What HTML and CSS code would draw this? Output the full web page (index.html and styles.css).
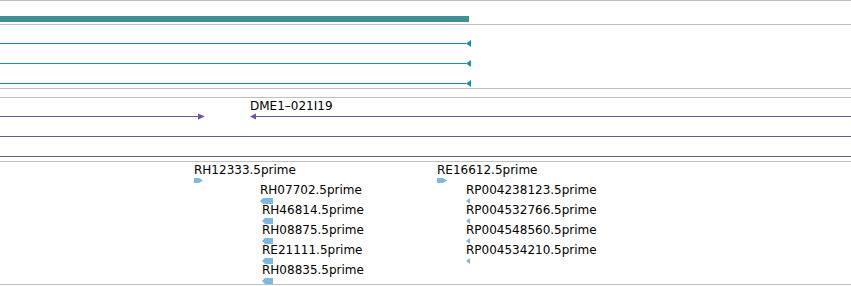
FILE: index.html
```html
<!DOCTYPE html>
<html>
<head>
<meta charset="utf-8">
<link rel="stylesheet" href="styles.css">
</head>
<body>
<div class="browser">
  <div class="track track-a">
    <div class="coverage"></div>
  </div>

  <div class="track track-b">
    <div class="row">
      <span class="line line-b"></span>
      <svg class="head" width="5" height="7" viewBox="0 0 5 7"><polygon points="0,3.5 5,0 5,7" fill="#1790b0"/></svg>
    </div>
    <div class="row">
      <span class="line line-b"></span>
      <svg class="head" width="5" height="7" viewBox="0 0 5 7"><polygon points="0,3.5 5,0 5,7" fill="#1790b0"/></svg>
    </div>
    <div class="row">
      <span class="line line-b"></span>
      <svg class="head" width="5" height="7" viewBox="0 0 5 7"><polygon points="0,3.5 5,0 5,7" fill="#1790b0"/></svg>
    </div>
  </div>

  <div class="spacer"></div>

  <div class="track track-c">
    <div class="clone-label">DME1–021I19</div>
    <div class="rows">
      <div class="row">
        <span class="line line-c seg-left"></span>
        <svg class="head" width="7" height="7" viewBox="0 0 7 7"><polygon points="0,0.5 7,3.5 0,6.5" fill="#7253a8"/></svg>
        <span class="gap-c"></span>
        <svg class="head" width="6" height="7" viewBox="0 0 6 7"><polygon points="0,3.5 6,0.5 6,6.5" fill="#7253a8"/></svg>
        <span class="line line-c seg-fill"></span>
      </div>
      <div class="row"><span class="line line-c seg-fill"></span></div>
      <div class="row"><span class="line line-c seg-fill"></span></div>
    </div>
  </div>

  <div class="track track-d">
    <div class="feature" style="left:194px;top:1px">
      <span class="label">RH12333.5prime</span>
      <svg width="9" height="6" viewBox="0 0 9 6"><polygon points="0,0 5,0 9,2.5 5,5 0,5" fill="#7cb8df"/></svg>
    </div>
    <div class="feature" style="left:260px;top:21px">
      <span class="label">RH07702.5prime</span>
      <svg width="13" height="6" viewBox="0 0 13 6"><polygon points="0,3 3,0 13,0 13,6 3,6" fill="#7cb8df"/></svg>
    </div>
    <div class="feature" style="left:262px;top:41px">
      <span class="label">RH46814.5prime</span>
      <svg width="11" height="6" viewBox="0 0 11 6"><polygon points="0,3 3,0 11,0 11,6 3,6" fill="#7cb8df"/></svg>
    </div>
    <div class="feature" style="left:262px;top:61px">
      <span class="label">RH08875.5prime</span>
      <svg width="11" height="6" viewBox="0 0 11 6"><polygon points="0,3 3,0 11,0 11,6 3,6" fill="#7cb8df"/></svg>
    </div>
    <div class="feature" style="left:262px;top:81px">
      <span class="label">RE21111.5prime</span>
      <svg width="11" height="6" viewBox="0 0 11 6"><polygon points="0,3 3,0 11,0 11,6 3,6" fill="#7cb8df"/></svg>
    </div>
    <div class="feature" style="left:262px;top:101px">
      <span class="label">RH08835.5prime</span>
      <svg width="11" height="6" viewBox="0 0 11 6"><polygon points="0,3 3,0 11,0 11,6 3,6" fill="#7cb8df"/></svg>
    </div>

    <div class="feature" style="left:437px;top:1px">
      <span class="label">RE16612.5prime</span>
      <svg width="10" height="6" viewBox="0 0 10 6"><polygon points="0,0 6,0 10,2.5 6,5 0,5" fill="#7cb8df"/></svg>
    </div>
    <div class="feature" style="left:466px;top:21px">
      <span class="label">RP004238123.5prime</span>
      <svg width="5" height="6" viewBox="0 0 5 6"><polygon points="0,3 4,0 4,6" fill="#7cb8df"/></svg>
    </div>
    <div class="feature" style="left:466px;top:41px">
      <span class="label">RP004532766.5prime</span>
      <svg width="5" height="6" viewBox="0 0 5 6"><polygon points="0,3 4,0 4,6" fill="#7cb8df"/></svg>
    </div>
    <div class="feature" style="left:466px;top:61px">
      <span class="label">RP004548560.5prime</span>
      <svg width="5" height="6" viewBox="0 0 5 6"><polygon points="0,3 4,0 4,6" fill="#7cb8df"/></svg>
    </div>
    <div class="feature" style="left:466px;top:81px">
      <span class="label">RP004534210.5prime</span>
      <svg width="5" height="6" viewBox="0 0 5 6"><polygon points="0,3 4,0 4,6" fill="#7cb8df"/></svg>
    </div>
  </div>
</div>
</body>
</html>
```

FILE: styles.css
```css
* { box-sizing: content-box; }

html, body {
  margin: 0;
  padding: 0;
  background: #ffffff;
}

body {
  width: 851px;
  height: 286px;
  overflow: hidden;
  font-family: "DejaVu Sans", "Liberation Sans", sans-serif;
  font-size: 12px;
  color: #000;
}

.browser {
  width: 851px;
  display: flex;
  flex-direction: column;
}

.track {
  position: relative;
  border-bottom: 1px solid #c0c0c0;
}

.track-a {
  border-top: 1px solid #c0c0c0;
  height: 23px;
}

.coverage {
  margin-top: 15px;
  width: 469px;
  height: 6px;
  background: #418f93;
}

.track-b {
  height: 48px;
  padding-top: 15px;
  display: flex;
  flex-direction: column;
  gap: 13px;
}

.row {
  display: flex;
  align-items: center;
  height: 7px;
}

.line {
  display: block;
  height: 1px;
}

.line-b {
  width: 466px;
  background: #1790b0;
}

.head {
  display: block;
  flex: none;
}

.spacer {
  height: 8px;
}

.track-c {
  border-top: 1px solid #c0c0c0;
  height: 62px;
  padding-top: 1px;
  display: flex;
  flex-direction: column;
}

.clone-label {
  margin-left: 250px;
  line-height: 14px;
  height: 14px;
  white-space: nowrap;
}

.rows {
  display: flex;
  flex-direction: column;
  gap: 13px;
}

.line-c {
  background: #7253a8;
}

.seg-left {
  width: 198px;
}

.gap-c {
  width: 45px;
  flex: none;
}

.seg-fill {
  flex: 1;
}

.track-d {
  height: 122px;
}

.feature {
  position: absolute;
  display: flex;
  flex-direction: column;
  align-items: flex-start;
}

.feature .label {
  line-height: 14px;
  height: 14px;
  white-space: nowrap;
}

.feature svg {
  display: block;
  margin-top: 1px;
}
```
